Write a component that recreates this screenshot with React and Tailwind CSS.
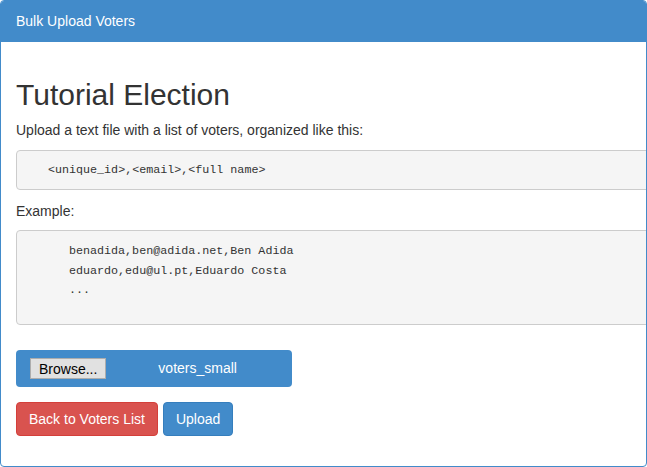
import React from "react";

export default function App() {
  const sans = { fontFamily: '"Liberation Sans", Arial, sans-serif' };
  const mono = { fontFamily: '"Liberation Mono", "DejaVu Sans Mono", monospace' };
  return (
    <div className="w-[647px] h-[467px] bg-white" style={sans}>
      <div className="h-[467px] border border-[#428bca] rounded-[4px] overflow-hidden flex flex-col">
        <div className="h-[41px] shrink-0 bg-[#428bca] text-white text-[14px] flex items-center px-[15px]">
          Bulk Upload Voters
        </div>
        <div className="px-[15px] text-[#333333] text-[14px]">
          <h1 className="text-[30px] leading-[33px] mt-[36px] mb-[9px] text-[#333]">Tutorial Election</h1>
          <p className="leading-[20px] mb-[10px]">Upload a text file with a list of voters, organized like this:</p>
          <pre
            className="h-[40px] -mr-[30px] bg-[#f5f5f5] border border-[#cccccc] rounded-[4px] pl-[31px] text-[11.7px] leading-[17px] pt-[11px] text-[#333]"
            style={mono}
          >
            {"<unique_id>,<email>,<full name>"}
          </pre>
          <p className="leading-[20px] mt-[11px] mb-[9px]">Example:</p>
          <pre
            className="h-[95px] -mr-[30px] bg-[#f5f5f5] border border-[#cccccc] rounded-[4px] pl-[52px] text-[11.7px] leading-[19.5px] pt-[11px] text-[#333]"
            style={mono}
          >
            {"benadida,ben@adida.net,Ben Adida\neduardo,edu@ul.pt,Eduardo Costa\n..."}
          </pre>
          <div className="mt-[25px] w-[276px] h-[37px] bg-[#428bca] rounded-[4px] flex items-center pl-[14px]">
            <button className="h-[21px] px-[8px] bg-[#e1e1e1] border border-[#adadad] text-[14px] text-black leading-none">
              Browse...
            </button>
            <span className="text-white text-[14px] ml-[52px]">voters_small</span>
          </div>
          <div className="mt-[15px] flex gap-[5px]">
            <button className="h-[34px] px-[12px] bg-[#d9534f] border border-[#d43f3a] rounded-[4px] text-white text-[14px]">
              Back to Voters List
            </button>
            <button className="h-[34px] px-[12px] bg-[#428bca] border border-[#357ebd] rounded-[4px] text-white text-[14px]">
              Upload
            </button>
          </div>
        </div>
      </div>
    </div>
  );
}
